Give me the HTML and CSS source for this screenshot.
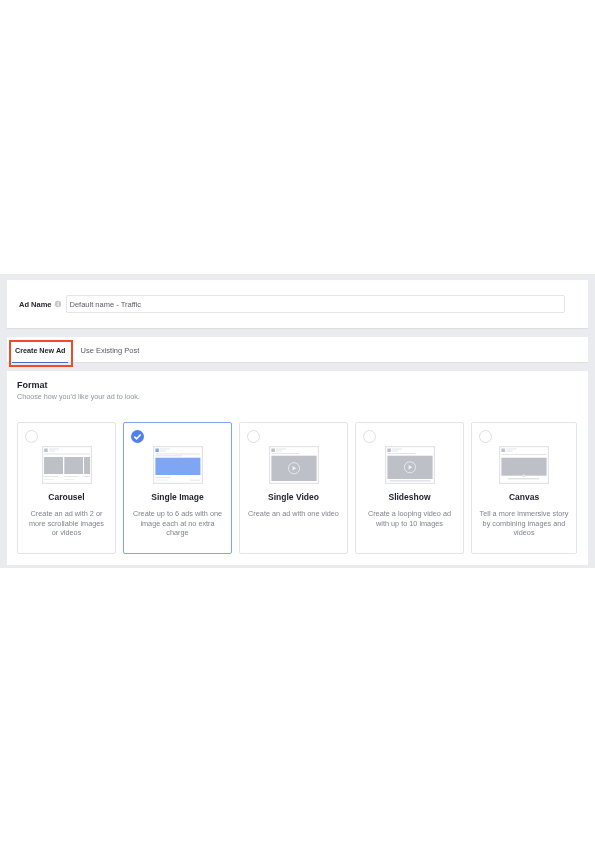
FILE: index.html
```html
<!DOCTYPE html>
<html lang="en">
<head>
<meta charset="utf-8">
<title>Create Ad</title>
<link rel="stylesheet" href="styles.css">
</head>
<body>
<main class="band">
  <section class="panel name-panel">
    <label class="name-label" for="ad-name">Ad Name</label>
    <svg class="info" viewBox="0 0 8 8" aria-hidden="true"><circle cx="4" cy="4" r="3.2" fill="#c4c7cd"/><rect x="3.5" y="3.4" width="1" height="2.6" fill="#fff"/><rect x="3.5" y="2" width="1" height="1" fill="#fff"/></svg>
    <input class="name-input" id="ad-name" type="text" value="Default name - Traffic">
  </section>
  <nav class="panel tabs">
    <span class="tab tab-active">Create New Ad<span class="highlight"></span></span>
    <span class="tab">Use Existing Post</span>
  </nav>
  <section class="panel format">
    <h2 class="format-title">Format</h2>
    <p class="format-sub">Choose how you'd like your ad to look.</p>
    <div class="cards">
      <article class="card">
        <span class="radio"></span>
        <svg class="mock" viewBox="0 0 50 38" aria-hidden="true">
          <rect x=".6" y=".6" width="48.8" height="36.8" fill="#fff" stroke="#e1e3e6" stroke-width="1.2"/>
          <rect x="2.2" y="2.5" width="3.5" height="3.5" fill="#bcc0c7"/><rect x="7" y="2.5" width="10" height="1" fill="#e2e4e8"/><rect x="7" y="4.5" width="6" height="1" fill="#e2e4e8"/>
          <rect x="2.2" y="7.5" width="45.6" height="1" fill="#e2e4e8"/>
          <rect x="2" y="11" width="19" height="17" fill="#bdc0c7"/><rect x="22.3" y="11" width="18.7" height="17" fill="#bdc0c7"/><rect x="42" y="11" width="6" height="17" fill="#bdc0c7"/>
          <rect x="2" y="30" width="14" height="1" fill="#e2e4e8"/><rect x="22.3" y="30" width="14" height="1" fill="#e2e4e8"/><rect x="42" y="30" width="6" height="1" fill="#e2e4e8"/>
          <rect x="2" y="33" width="10" height="1" fill="#eceef0"/><rect x="22.3" y="33" width="10" height="1" fill="#eceef0"/>
        </svg>
        <h3 class="card-title">Carousel</h3>
        <p class="card-text">Create an ad with 2 or<br>more scrollable images<br>or videos</p>
      </article>
      <article class="card card-selected">
        <span class="radio radio-on"><svg viewBox="0 0 14 14" aria-hidden="true"><path d="M3.6 7.2l2.4 2.3 4.4-4.6" fill="none" stroke="#fff" stroke-width="1.7"/></svg></span>
        <svg class="mock" viewBox="0 0 50 38" aria-hidden="true">
          <rect x=".6" y=".6" width="48.8" height="36.8" fill="#fff" stroke="#e1e3e6" stroke-width="1.2"/>
          <rect x="2.4" y="2.5" width="3.5" height="3.5" fill="#7ea6f5"/><rect x="7" y="2.5" width="10" height="1" fill="#e2e4e8"/><rect x="7" y="4.5" width="6" height="1" fill="#e2e4e8"/>
          <rect x="2.4" y="7.5" width="45" height="1" fill="#e2e4e8"/><rect x="2.4" y="9.3" width="27" height="1" fill="#e2e4e8"/>
          <rect x="2.4" y="11.7" width="45" height="17.3" fill="#7ea6f5"/>
          <rect x="2.4" y="31" width="15" height="1" fill="#e2e4e8"/><rect x="2.4" y="33.5" width="12" height="1" fill="#eceef0"/><rect x="37" y="33.5" width="10" height="1.5" fill="#eceef0"/>
        </svg>
        <h3 class="card-title">Single Image</h3>
        <p class="card-text">Create up to 6 ads with one<br>image each at no extra<br>charge</p>
      </article>
      <article class="card">
        <span class="radio"></span>
        <svg class="mock" viewBox="0 0 50 38" aria-hidden="true">
          <rect x=".6" y=".6" width="48.8" height="36.8" fill="#fff" stroke="#e1e3e6" stroke-width="1.2"/>
          <rect x="2.4" y="2.5" width="3.5" height="3.5" fill="#bcc0c7"/><rect x="7" y="2.5" width="10" height="1" fill="#e2e4e8"/><rect x="7" y="4.5" width="6" height="1" fill="#e2e4e8"/>
          <rect x="2.4" y="7" width="28" height="1" fill="#e2e4e8"/>
          <rect x="2.4" y="9.7" width="45.2" height="25.3" fill="#bdc0c7"/>
          <circle cx="25" cy="22.3" r="5.6" fill="none" stroke="#e9ebee" stroke-width=".9"/><path d="M23.6 20.1l3.6 2.2-3.6 2.2z" fill="#f2f3f5"/>
        </svg>
        <h3 class="card-title">Single Video</h3>
        <p class="card-text">Create an ad with one video</p>
      </article>
      <article class="card">
        <span class="radio"></span>
        <svg class="mock" viewBox="0 0 50 38" aria-hidden="true">
          <rect x=".6" y=".6" width="48.8" height="36.8" fill="#fff" stroke="#e1e3e6" stroke-width="1.2"/>
          <rect x="2.4" y="2.5" width="3.5" height="3.5" fill="#bcc0c7"/><rect x="7" y="2.5" width="10" height="1" fill="#e2e4e8"/><rect x="7" y="4.5" width="6" height="1" fill="#e2e4e8"/>
          <rect x="2.4" y="7" width="28" height="1" fill="#e2e4e8"/>
          <rect x="2.4" y="9.7" width="45.2" height="23.3" fill="#bdc0c7"/>
          <rect x="4.5" y="34" width="41" height="1.5" fill="#e2e4e8"/>
          <circle cx="25" cy="21.3" r="5.6" fill="none" stroke="#e9ebee" stroke-width=".9"/><path d="M23.6 19.1l3.6 2.2-3.6 2.2z" fill="#f2f3f5"/>
        </svg>
        <h3 class="card-title">Slideshow</h3>
        <p class="card-text">Create a looping video ad<br>with up to 10 images</p>
      </article>
      <article class="card">
        <span class="radio"></span>
        <svg class="mock" viewBox="0 0 50 38" aria-hidden="true">
          <rect x=".6" y=".6" width="48.8" height="36.8" fill="#fff" stroke="#e1e3e6" stroke-width="1.2"/>
          <rect x="2.4" y="2.5" width="3.5" height="3.5" fill="#bcc0c7"/><rect x="7.5" y="2.5" width="10" height="1" fill="#e2e4e8"/><rect x="7.5" y="4.5" width="6" height="1" fill="#e2e4e8"/>
          <rect x="2.4" y="8" width="45" height="1" fill="#e2e4e8"/>
          <rect x="2.4" y="11.7" width="45.2" height="18" fill="#bdc0c7"/>
          <rect x="9" y="32.3" width="31" height="1" fill="#d3d5da"/><circle cx="24.8" cy="29.7" r="1.5" fill="#e4e6e9"/>
        </svg>
        <h3 class="card-title">Canvas</h3>
        <p class="card-text">Tell a more immersive story<br>by combining images and<br>videos</p>
      </article>
    </div>
  </section>
</main>
</body>
</html>
```
FILE: styles.css
```css
* { box-sizing: border-box; }
html, body { margin: 0; padding: 0; background: #fff; }
body { width: 595px; height: 842px; overflow: hidden; padding-top: 274px; font-family: "Liberation Sans", Arial, sans-serif; }
.band { background: #e9ebee; padding: 6px 7px 3px; display: flex; flex-direction: column; gap: 8px; filter: blur(0.5px); }
.panel { background: #fff; border-bottom: 1px solid #dddfe2; }
.name-panel { height: 49px; display: flex; align-items: center; padding: 0 23px 0 12px; }
.name-label { font-size: 7.5px; font-weight: 700; color: #23272e; }
.info { width: 8px; height: 8px; margin: 0 4px 0 2px; flex: none; }
.name-input { flex: 1; height: 18px; min-width: 0; border: 1px solid #e3e5e8; border-radius: 2px; padding: 0 3px; font: 7.5px "Liberation Sans", Arial, sans-serif; color: #5a5e66; background: #fff; outline: 0; }
.tabs { height: 26px; display: flex; align-items: center; position: relative; padding-left: 8px; gap: 15px; }
.tab { font-size: 7.5px; color: #555a63; position: relative; line-height: 25px; padding-top: 1px; }
.tab-active { font-size: 7.2px; font-weight: 700; color: #1d2129; }
.tab-active::after { content: ""; position: absolute; left: -3px; right: -3px; bottom: 0; height: 1px; background: #4a6fc0; }
.highlight { position: absolute; left: -6px; top: 3px; width: 64px; height: 27px; border: 2px solid #f2492b; pointer-events: none; }
.format { height: 194px; padding: 9px 10px 0; border-bottom: 0; }
.format-title { margin: 0; font-size: 9px; line-height: 11px; font-weight: 700; color: #1d2129; }
.format-sub { margin: 1px 0 0; font-size: 7.2px; line-height: 10px; color: #90949c; }
.cards { display: grid; grid-template-columns: 99px 109px 109px 109px 106px; gap: 7px; margin-top: 20px; }
.card { position: relative; height: 132px; background: #fff; border: 1px solid #e2e4e8; border-radius: 2px; display: flex; flex-direction: column; align-items: center; padding: 23px 0 0; }
.card-selected { border-color: #7ea6f5; }
.radio { position: absolute; left: 7px; top: 7px; width: 13px; height: 13px; border: 1px solid #dddfe2; border-radius: 50%; background: #fff; }
.radio-on { background: #4f80ee; border: 0; }
.radio-on svg { display: block; width: 13px; height: 13px; }
.mock { width: 50px; height: 38px; display: block; flex: none; }
.card-title { margin: 7px 0 0; font-size: 8.5px; line-height: 12px; font-weight: 700; color: #1d2129; text-align: center; }
.card-text { margin: 6px 0 0; font-size: 7.3px; line-height: 9.7px; color: #7f838b; text-align: center; white-space: nowrap; }
```
